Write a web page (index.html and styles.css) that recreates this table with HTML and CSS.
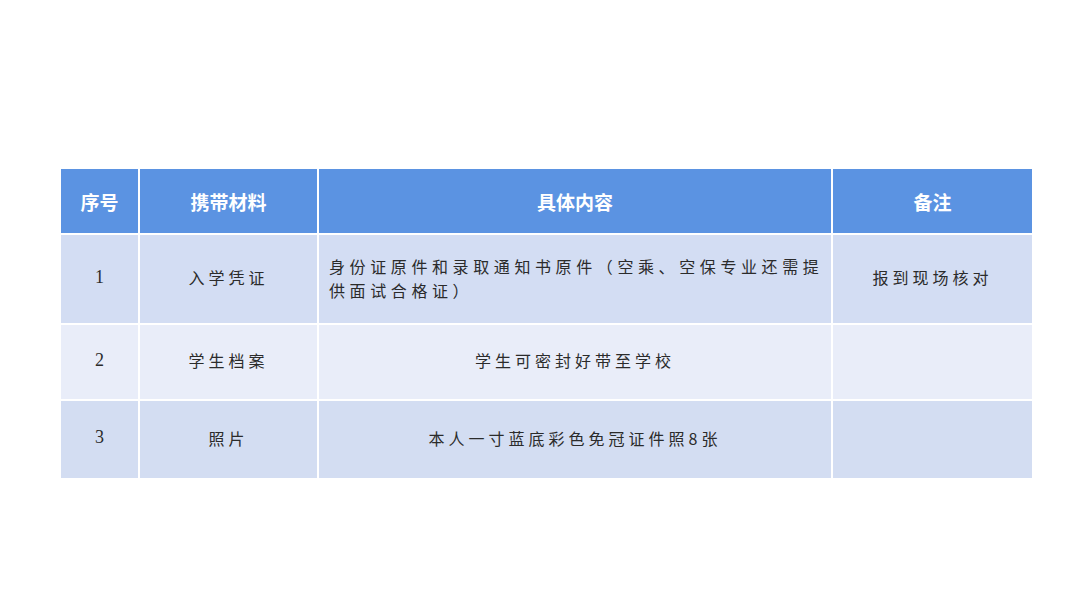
FILE: index.html
```html
<!DOCTYPE html>
<html lang="zh">
<head>
<meta charset="utf-8">
<link rel="stylesheet" href="styles.css">
</head>
<body>
<div class="page">
  <div class="table">
    <div class="cell head">序号</div>
    <div class="cell head">携带材料</div>
    <div class="cell head">具体内容</div>
    <div class="cell head">备注</div>

    <div class="cell r1 num">1</div>
    <div class="cell r1">入学凭证</div>
    <div class="cell r1 left">身份证原件和录取通知书原件（空乘、空保专业还需提供面试合格证）</div>
    <div class="cell r1">报到现场核对</div>

    <div class="cell r2 num">2</div>
    <div class="cell r2">学生档案</div>
    <div class="cell r2">学生可密封好带至学校</div>
    <div class="cell r2"></div>

    <div class="cell r3 num">3</div>
    <div class="cell r3">照片</div>
    <div class="cell r3">本人一寸蓝底彩色免冠证件照8张</div>
    <div class="cell r3"></div>
  </div>
</div>
</body>
</html>
```

FILE: styles.css
```css
html, body {
  margin: 0;
  padding: 0;
  background: #ffffff;
}
.page {
  width: 1080px;
  height: 608px;
  padding: 169px 0 0 61px;
  box-sizing: border-box;
}
.table {
  display: grid;
  grid-template-columns: 77px 177px 512px 199px;
  grid-template-rows: 64px 88px 74px 77px;
  gap: 2px;
  width: 971px;
}
.cell {
  display: flex;
  align-items: center;
  justify-content: center;
  font-family: "Noto Sans CJK SC", "Noto Sans", sans-serif;
  font-size: 16px;
  letter-spacing: 4px;
  color: #2b2b2b;
  padding-bottom: 4px;
  box-sizing: border-box;
}
.head {
  background: #5b93e2;
  color: #ffffff;
  font-weight: 700;
  font-size: 19px;
  letter-spacing: 0;
  padding-bottom: 0;
}
.r1 { background: #d3ddf3; }
.r2 { background: #e9edf9; }
.r3 { background: #d3ddf2; }
.num {
  font-family: "Liberation Serif", serif;
  font-size: 18px;
  letter-spacing: 0;
}
.left {
  justify-content: flex-start;
  text-align: left;
  padding: 0 4px 2px 10px;
  line-height: 24px;
  letter-spacing: 4.6px;
}
```
